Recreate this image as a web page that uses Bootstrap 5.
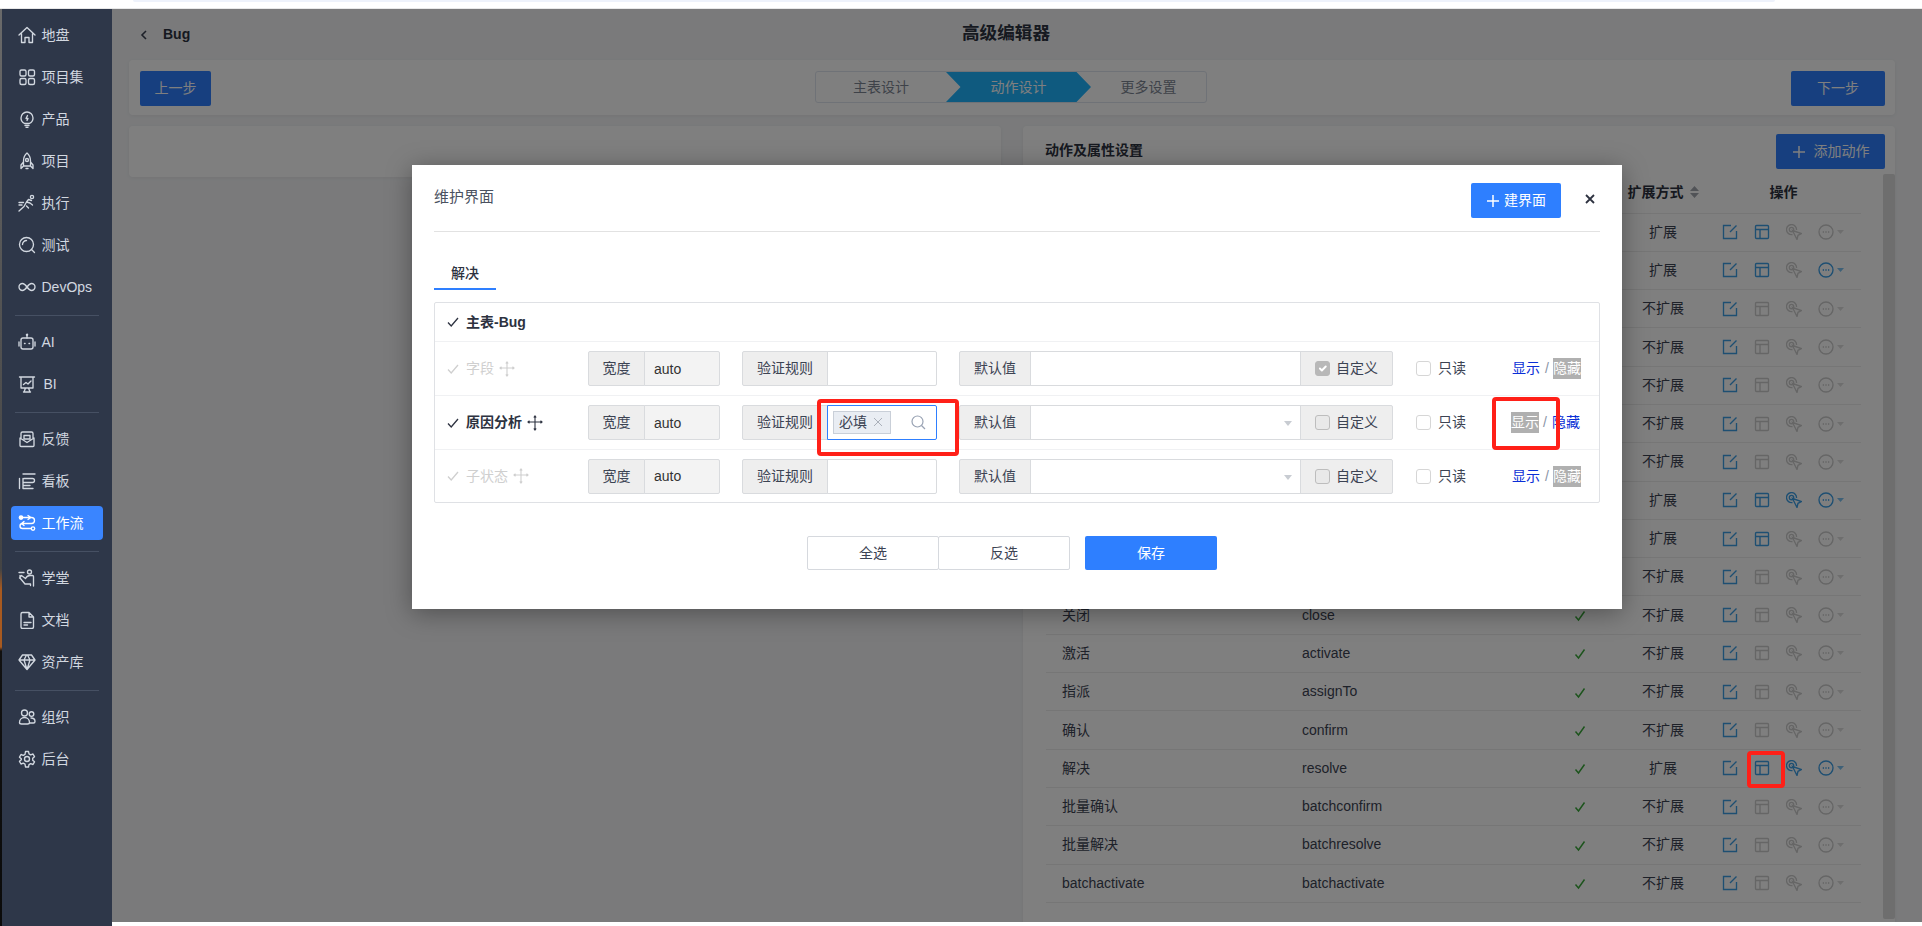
<!DOCTYPE html>
<html lang="zh">
<head>
<meta charset="utf-8">
<title>高级编辑器</title>
<link href="https://cdn.jsdelivr.net/npm/bootstrap@5.3.0/dist/css/bootstrap.min.css" rel="stylesheet">
<style>
html,body{height:926px;overflow:hidden}
body{font-family:"Liberation Sans","Noto Sans CJK SC",sans-serif;font-size:14px;color:#3c4353;background:#fff}
.shell{position:relative;width:1922px;height:926px;overflow:hidden}
.topstrip{height:9px;background:#fff;border-bottom:1px solid #e8e8e8}
.topstrip-bar{margin-left:133px;width:1642px;height:2px;background:#eef2fb;border-radius:0 0 6px 6px}
.frame{height:917px}
.edgeline{width:2px;background:linear-gradient(#6a6a6a 0,#555 260px,#444 560px,#a85a20 580px,#a85a20 638px,#111 642px,#0b0b0b 100%)}
.sidenav{width:110px;background:#2e3749;padding:9px 9px 0;color:#cdd3dc}
.sideitem{height:34px;margin-bottom:8px;padding:0 7px;gap:5.5px;border-radius:4px;color:#d2d8e0;line-height:1}
.sideitem svg{width:18px;height:18px;fill:none;stroke:currentColor;stroke-width:1.35;stroke-linecap:round;stroke-linejoin:round;flex:none}
.sideitem.is-on{background:#3a85ff;color:#fff}
.sidesep{height:1px;background:#465063;margin:11px 4px 9px}
.nudge{margin-left:2px}
.maincol{width:1810px}
.mainarea{position:relative;height:913px;background:#f4f5f7;overflow:hidden;padding:0 27px 0 17px}
.foot{height:4px;background:#fff}
.pagehead{height:51px;position:relative}
.backcaret{width:8px;height:12px;margin-left:11px;margin-right:15px;stroke:#3c4353;fill:none;stroke-width:1.6}
.pagebug{font-weight:700;font-size:14px;color:#2d3240}
.pagetitle{position:absolute;left:0;right:0;text-align:center;font-weight:700;font-size:17.6px;color:#2d3240;top:12px;line-height:24px;padding-right:12px}
.sheet{background:#fff;border-radius:4px;box-shadow:0 1px 4px rgba(0,0,0,.06)}
.toolbar{height:55px;padding:11px 10px 0 11px;margin-bottom:11px}
.btn-brand{background:#2e7fff;border:0;border-radius:2px;color:#fff;font-size:14px;height:35px;display:inline-flex;align-items:center;justify-content:center;padding:0}
.w-prev{width:71px}.w-next{width:94px}
.stepper{width:392px;height:32px;border:1px solid #dfe5ee;border-radius:3px;margin-left:20px;color:#7d8593}
.stepitem{line-height:30px;text-align:center}
.step-a{width:130px}
.step-b{width:145px;background:#1eb4ff;color:#fff;clip-path:polygon(0 0,90% 0,100% 50%,90% 100%,0 100%,10% 50%)}
.step-c{width:115px}
.colsrow{gap:22px}
.leftsheet{width:872px;height:51px}
.rightsheet{width:872px;height:810px;position:relative;padding:8px 10px 0 22px}
.sheethead{height:39px}
.sheettitle{font-weight:700;color:#2d3240;padding-top:6px}
.btn-add{width:109px;gap:8px}
.btn-add svg{width:14px;height:14px;stroke:#fff;stroke-width:1.5;fill:none}
.actable{table-layout:fixed;width:815px;margin:0 0 0 1px;--bs-table-bg:transparent;--bs-table-color:#3c4353;color:#3c4353;border-color:#ececec}
.actable th,.actable td{padding:0 16px;vertical-align:middle;border-bottom:1px solid #ececec;white-space:nowrap}
.actable thead th{height:40px;color:#2d3240}
.actable tbody td{height:38.3px}
.c-name{width:240px}.c-code{width:254px}.c-flag{width:80px;text-align:center}.c-ext{width:86px;text-align:center;padding:0!important}.c-act{width:155px}
.sortmark{width:9px;height:14px;fill:#a3a7ae;margin-left:6px;vertical-align:-2px}
.okmark{width:12px;height:12px;fill:none;stroke:#3aa83a;stroke-width:1.5}
.iconset{gap:16px}
.acticon{width:16px;height:16px;fill:none;stroke:#ccc;stroke-width:1.35;flex:none}
.acticon.on{stroke:#3c9ee5}
.dropmark{width:7px;height:4px;fill:#ddd;margin-left:-13px}
.dropmark.on{fill:#7cc0ef}
.scrollthumb{position:absolute;right:0;top:48px;width:12px;height:745px;background:#dcdcdc;border-radius:2px}
.veil{position:absolute;inset:0;background:rgba(0,0,0,.5);display:flex;justify-content:center;padding-top:156px}
.dialogbox{width:1210px;height:444px;background:#fff;padding:18px 22px 0 22px;box-shadow:0 4px 24px rgba(0,0,0,.35);color:#3c4353}
.dialoghead{height:49px;border-bottom:1px solid #e2e2e2;align-items:flex-start}
.dialogtitle{font-size:15px;color:#4a5160;line-height:28px}
.btn-new{width:90px;gap:4px}
.btn-new svg{width:14px;height:14px;stroke:#fff;stroke-width:1.5;fill:none}
.closemark{width:10px;height:10px;stroke:#2d3240;stroke-width:1.8;margin:11px 5px 0 0;fill:none}
.tabbar{margin-top:21px;height:37px}
.tabone{width:62px;height:37px;line-height:40px;text-align:center;border-bottom:2px solid #2e7fff;color:#2d3240;font-weight:500}
.formbox{margin-top:12px;width:1166px;border:1px solid #dfe1e5;border-radius:2px}
.formhead{height:38px;padding-left:12px;font-weight:700;color:#2d3240;gap:7px}
.formrow{height:54px;border-top:1px solid #f0f1f3;padding-left:12px}
.formrow.last{height:53px}
.tickmark{width:12px;height:12px;fill:none;stroke:#2d3240;stroke-width:1.3;flex:none}
.fieldname{width:141px;gap:7px;color:#2d3240;font-weight:700}
.fieldname.off{color:#cfcfcf;font-weight:400}
.off .tickmark{stroke:#cfcfcf}
.movemark{width:16px;height:16px;stroke:#2d3240;stroke-width:1.1;fill:none;flex:none;margin-left:-2px}
.off .movemark{stroke:#cfcfcf}
.fg{height:35px;flex-wrap:nowrap}
.fg .input-group-text{background:#eee;border:1px solid #d9dbde;border-radius:2px;font-size:14px;color:#3c4353;padding:0;justify-content:center}
.fg .form-control{height:35px;min-height:35px;font-size:14px;border:1px solid #d9dbde;border-radius:2px;padding:0 9px;box-shadow:none;color:#333;background-color:#fff}
.fg-w{width:132px;margin-right:22px}.fg-r{width:195px;margin-right:22px}.fg-d{width:434px;margin-right:23px}
.lab-w{width:57px}.lab-r{width:86px}.lab-d{width:72px}.lab-c{width:93px;gap:6px}
.fg .form-control.ro{background:#f3f3f3}
.fg .selbox{position:relative;flex:1;border:1px solid #d9dbde;background:#fff;margin-left:-1px;border-radius:2px}
.selcaret{position:absolute;right:8px;top:15px;width:8px;height:5px;fill:#c8ccd2}
.rulebox{position:relative;flex:1;margin-left:-1px;border:1px solid #2e7fff;border-radius:2px;background:#fff}
.ruletag{position:absolute;left:5px;top:5px;width:58px;height:23px;background:#e9edf3;border:1px solid #c9cfd8;font-size:14px;line-height:21px;padding-left:5px;color:#3c4353}
.ruletag svg{width:10px;height:10px;stroke:#aab0ba;fill:none;stroke-width:1;margin-left:6px;vertical-align:0}
.rulesearch{position:absolute;right:10px;top:9px;width:15px;height:15px;stroke:#98a2b3;fill:none;stroke-width:1.2}
.fg .form-check-input{width:15px;height:15px;margin:0;border-color:#bdbdbd;border-radius:3px;background-color:#e9e9e9;opacity:1;flex:none}
.fg .form-check-input:checked{background-color:#b8b8b8;border-color:#b8b8b8}
.readbox{width:96px;gap:7px}
.readbox .form-check-input{width:15px;height:15px;margin:0;border-color:#d6d6d6;border-radius:3px;flex:none}
.linkset{gap:5px;white-space:nowrap}
.linkset a{color:#0a2fd6;text-decoration:none}
.linkset .sl{color:#8a94a6}
.linkset .picked{background:#b0b0b0;color:#fff;margin:0 -1px}
.dialogfoot{margin-top:33px;padding-left:373px}
.btn-plain{width:132px;height:34px;background:#fff;border:1px solid #d6d9de;border-radius:2px;color:#3c4353;font-size:14px;padding:0}
.btn-plain+.btn-plain{margin-left:-1px}
.btn-save{width:132px;height:34px;margin-left:15px}
.markbox{position:absolute;border:4px solid #ff2018;border-radius:4px;pointer-events:none}
.mb-1{left:817px;top:399px;width:142px;height:57px}
.mb-2{left:1492px;top:397px;width:68px;height:53px}
.mb-3{left:1747px;top:751px;width:38px;height:37px}
</style>
</head>
<body>
<svg width="0" height="0" class="position-absolute">
<defs>
<symbol id="a-edit" viewBox="0 0 16 16"><path d="M9 1.500H1.500v13h13V7M14.500 1.500 8 8"/></symbol>
<symbol id="a-lay" viewBox="0 0 16 16"><rect x="1.500" y="1.500" width="13" height="13" rx="1"/><path d="M1.500 5.500h13M6 5.500v9"/></symbol>
<symbol id="a-tag" viewBox="0 0 16 16"><path d="M6.500 10.500A5 5 0 1 1 10.500 6"/><circle cx="5.500" cy="5.500" r="2.200"/><path d="M6.500 6.500l9 3-3.500 1.800-1 4.200z"/></symbol>
<symbol id="a-more" viewBox="0 0 16 16"><circle cx="8" cy="8" r="7"/><path d="M4.800 8h1M7.500 8h1M10.200 8h1" stroke-width="1.800"/></symbol>
<symbol id="a-ok" viewBox="0 0 12 12"><path d="M1.500 6.500 4.500 10 10.500 1.500"/></symbol>
<symbol id="a-move" viewBox="0 0 16 16"><path d="M8 1v14M1 7h14M6.800 2.500 8 1l1.200 1.500M6.800 13.500 8 15l1.200-1.500M2.500 5.800 1 7l1.500 1.200M13.500 5.800 15 7l-1.500 1.200"/></symbol>
<symbol id="a-tick" viewBox="0 0 12 12"><path d="M1 6.500 4.200 10 11 2"/></symbol>
</defs>
</svg>
<div class="shell">
  <div class="topstrip"><div class="topstrip-bar"></div></div>
  <div class="frame d-flex">
    <div class="edgeline"></div>
    <nav class="sidenav">
      <div class="sideitem d-flex align-items-center"><svg viewBox="0 0 18 18"><path d="M1 9 9 1.500 17 9M3.500 7.500V16.500H7V11.500h4v5h3.500V7.500"/></svg><span>地盘</span></div>
      <div class="sideitem d-flex align-items-center"><svg viewBox="0 0 18 18"><rect x="2" y="2" width="6" height="6" rx="1.500"/><rect x="10.500" y="2" width="6" height="6" rx="1.500"/><rect x="2" y="10.500" width="6" height="6" rx="1.500"/><rect x="10.500" y="10.500" width="6" height="6" rx="1.500"/></svg><span>项目集</span></div>
      <div class="sideitem d-flex align-items-center"><svg viewBox="0 0 18 18"><path d="M6.500 13.500C4.500 12.500 3 10.500 3 8a6 6 0 0 1 12 0c0 2.500-1.500 4.500-3.500 5.500zM7 15.500h4M8 17.300h2M9.500 5.500 8 8.500h2l-1 2"/></svg><span>产品</span></div>
      <div class="sideitem d-flex align-items-center"><svg viewBox="0 0 18 18"><path d="M9 1c-2.500 2-3.500 5-3.500 8v5h7V9c0-3-1-6-3.500-8zM5.500 10 3 13v3.500l2.500-2.500M12.500 10l2.500 3v3.500L12.500 14M8 16.500h2"/><circle cx="9" cy="8" r="1.500"/></svg><span>项目</span></div>
      <div class="sideitem d-flex align-items-center"><svg viewBox="0 0 18 18"><circle cx="14" cy="3" r="1.600"/><path d="M1 17 6 12.500l2.500-4.500 3.500 1 2.500 2M8.500 8l2-2.500 3 1M8.500 12l2 2M1 8.500h4.500M1 11h3"/></svg><span>执行</span></div>
      <div class="sideitem d-flex align-items-center"><svg viewBox="0 0 18 18"><circle cx="8.500" cy="8.500" r="7"/><path d="M13.500 13.500 16.500 16.500M4.500 8.500a4 4 0 0 1 4-4"/></svg><span>测试</span></div>
      <div class="sideitem d-flex align-items-center"><svg viewBox="0 0 18 18"><path d="M9 9C7.500 7 6 5.500 4.500 5.500a3.500 3.500 0 0 0 0 7C6 12.500 7.500 11 9 9zm0 0c1.500-2 3-3.500 4.500-3.500a3.500 3.500 0 0 1 0 7C12 12.500 10.500 11 9 9z"/></svg><span>DevOps</span></div>
      <div class="sidesep"></div>
      <div class="sideitem d-flex align-items-center"><svg viewBox="0 0 18 18"><rect x="3" y="5" width="12" height="11" rx="2"/><path d="M9 5V2M1 9v4M17 9v4M6.500 10.500h.6M11 10.500h.6"/><circle cx="9" cy="1.800" r=".6"/></svg><span>AI</span></div>
      <div class="sideitem d-flex align-items-center"><svg viewBox="0 0 18 18"><path d="M1.500 2h15M3 2v11h12V2M6 17l1.500-4M12 17l-1.500-4M5.500 17h7M5.500 9.500l2.500-2 2 1.500 3-3"/></svg><span class="nudge">BI</span></div>
      <div class="sidesep"></div>
      <div class="sideitem d-flex align-items-center"><svg viewBox="0 0 18 18"><path d="M3 8V3.500C3 2.500 3.800 2 4.500 2h9c.7 0 1.500.5 1.500 1.500V8M2 8v7.500c0 .5.500 1 1 1h12c.5 0 1-.5 1-1V8L9 12.500zM6 5.500h6V9H6z"/></svg><span>反馈</span></div>
      <div class="sideitem d-flex align-items-center"><svg viewBox="0 0 18 18"><path d="M5 2h12M1.500 6.500v10M6 6.500h8.500a1.500 1.500 0 0 1 0 4H5M5 6.500v4M5 10.500v6h10M5 13.500h7"/></svg><span>看板</span></div>
      <div class="sideitem is-on d-flex align-items-center"><svg viewBox="0 0 18 18"><circle cx="3" cy="3.500" r="1.700" fill="currentColor"/><circle cx="15" cy="14.500" r="1.700"/><path d="M5 3.500h8.500a3 3 0 0 1 0 6h-9a2.500 2.500 0 0 0 0 5H13M10 1.500l3 2-3 2M6 7.500l-2.500 2 2.500 2"/></svg><span>工作流</span></div>
      <div class="sidesep"></div>
      <div class="sideitem d-flex align-items-center"><svg viewBox="0 0 18 18"><circle cx="11.500" cy="3" r="2"/><path d="M1 3.500h5M2 6.500v2.500l5 6h5.500v1.500M1.500 9l2-2.500 4 3M7.500 9.500c1-2 2.500-3 4.500-3h2.500c.7 0 1 .5 1 1V17"/></svg><span>学堂</span></div>
      <div class="sideitem d-flex align-items-center"><svg viewBox="0 0 18 18"><path d="M3 3c0-1 .5-1.500 1.500-1.500H11L15.500 6v10c0 1-.5 1.500-1.500 1.500H4.500C3.500 17.500 3 17 3 16zM11 1.500V6h4.500M6 11.500h7M6 14h3.500"/></svg><span>文档</span></div>
      <div class="sideitem d-flex align-items-center"><svg viewBox="0 0 18 18"><path d="M4.500 2h9L17 7 9 16.500 1 7zM1 7h16M6 7l3 9.500L12 7 9.500 2M6 7l2.500-5"/></svg><span>资产库</span></div>
      <div class="sidesep"></div>
      <div class="sideitem d-flex align-items-center"><svg viewBox="0 0 18 18"><circle cx="6.500" cy="5" r="3"/><circle cx="13.500" cy="6" r="2.300"/><path d="M1.500 14.500c0-3 2.200-5 5-5s5 2 5 5c0 1-1 1.500-2 1.500H3.500c-1 0-2-.5-2-1.500zM13 10c2.300 0 4 1.500 4 3.500 0 .8-.7 1.500-1.500 1.500H12"/></svg><span>组织</span></div>
      <div class="sideitem d-flex align-items-center"><svg viewBox="0 0 18 18"><circle cx="9" cy="9" r="2.500"/><path d="M7.500 1.500h3l.5 2.300 1.700 1 2.300-.8 1.500 2.700-1.800 1.600v1.900l1.800 1.600-1.500 2.700-2.300-.8-1.700 1-.5 2.300h-3L7 14.200l-1.700-1-2.300.8-1.500-2.700 1.800-1.600V8.800L1.500 7.200 3 4.500l2.300.8 1.700-1z"/></svg><span>后台</span></div>
    </nav>
    <div class="maincol">
      <main class="mainarea">
        <div class="pagehead d-flex align-items-center">
          <svg class="backcaret" viewBox="0 0 8 12"><path d="M6 2 2 6l4 4"/></svg>
          <span class="pagebug">Bug</span>
          <div class="pagetitle">高级编辑器</div>
        </div>
        <div class="sheet toolbar d-flex justify-content-between align-items-start">
          <button class="btn-brand w-prev" type="button">上一步</button>
          <div class="stepper d-flex">
            <div class="stepitem step-a">主表设计</div>
            <div class="stepitem step-b">动作设计</div>
            <div class="stepitem step-c">更多设置</div>
          </div>
          <button class="btn-brand w-next" type="button">下一步</button>
        </div>
        <div class="colsrow d-flex">
          <div class="sheet leftsheet"></div>
          <div class="sheet rightsheet">
            <div class="sheethead d-flex justify-content-between align-items-start">
              <div class="sheettitle">动作及属性设置</div>
              <button class="btn-brand btn-add" type="button"><svg viewBox="0 0 14 14"><path d="M7 1v12M1 7h12"/></svg>添加动作</button>
            </div>
            <table class="table actable mb-0">
              <thead><tr><th class="c-name"></th><th class="c-code"></th><th class="c-flag"></th><th class="c-ext">扩展方式<svg class="sortmark" viewBox="0 0 9 14"><path d="M4.500 1 9 6H0zM0 8h9l-4.500 5z"/></svg></th><th class="c-act text-center">操作</th></tr></thead>
              <tbody>
<tr><td></td><td></td><td class="c-flag"></td><td class="c-ext">扩展</td><td><div class="iconset d-flex align-items-center"><svg class="acticon on"><use href="#a-edit"/></svg><svg class="acticon on"><use href="#a-lay"/></svg><svg class="acticon"><use href="#a-tag"/></svg><svg class="acticon"><use href="#a-more"/></svg><svg class="dropmark" viewBox="0 0 7 4"><path d="M0 0h7L3.500 4z"/></svg></div></td></tr>
<tr><td></td><td></td><td class="c-flag"></td><td class="c-ext">扩展</td><td><div class="iconset d-flex align-items-center"><svg class="acticon on"><use href="#a-edit"/></svg><svg class="acticon on"><use href="#a-lay"/></svg><svg class="acticon"><use href="#a-tag"/></svg><svg class="acticon on"><use href="#a-more"/></svg><svg class="dropmark on" viewBox="0 0 7 4"><path d="M0 0h7L3.500 4z"/></svg></div></td></tr>
<tr><td></td><td></td><td class="c-flag"></td><td class="c-ext">不扩展</td><td><div class="iconset d-flex align-items-center"><svg class="acticon on"><use href="#a-edit"/></svg><svg class="acticon"><use href="#a-lay"/></svg><svg class="acticon"><use href="#a-tag"/></svg><svg class="acticon"><use href="#a-more"/></svg><svg class="dropmark" viewBox="0 0 7 4"><path d="M0 0h7L3.500 4z"/></svg></div></td></tr>
<tr><td></td><td></td><td class="c-flag"></td><td class="c-ext">不扩展</td><td><div class="iconset d-flex align-items-center"><svg class="acticon on"><use href="#a-edit"/></svg><svg class="acticon"><use href="#a-lay"/></svg><svg class="acticon"><use href="#a-tag"/></svg><svg class="acticon"><use href="#a-more"/></svg><svg class="dropmark" viewBox="0 0 7 4"><path d="M0 0h7L3.500 4z"/></svg></div></td></tr>
<tr><td></td><td></td><td class="c-flag"></td><td class="c-ext">不扩展</td><td><div class="iconset d-flex align-items-center"><svg class="acticon on"><use href="#a-edit"/></svg><svg class="acticon"><use href="#a-lay"/></svg><svg class="acticon"><use href="#a-tag"/></svg><svg class="acticon"><use href="#a-more"/></svg><svg class="dropmark" viewBox="0 0 7 4"><path d="M0 0h7L3.500 4z"/></svg></div></td></tr>
<tr><td></td><td></td><td class="c-flag"></td><td class="c-ext">不扩展</td><td><div class="iconset d-flex align-items-center"><svg class="acticon on"><use href="#a-edit"/></svg><svg class="acticon"><use href="#a-lay"/></svg><svg class="acticon"><use href="#a-tag"/></svg><svg class="acticon"><use href="#a-more"/></svg><svg class="dropmark" viewBox="0 0 7 4"><path d="M0 0h7L3.500 4z"/></svg></div></td></tr>
<tr><td></td><td></td><td class="c-flag"></td><td class="c-ext">不扩展</td><td><div class="iconset d-flex align-items-center"><svg class="acticon on"><use href="#a-edit"/></svg><svg class="acticon"><use href="#a-lay"/></svg><svg class="acticon"><use href="#a-tag"/></svg><svg class="acticon"><use href="#a-more"/></svg><svg class="dropmark" viewBox="0 0 7 4"><path d="M0 0h7L3.500 4z"/></svg></div></td></tr>
<tr><td></td><td></td><td class="c-flag"></td><td class="c-ext">扩展</td><td><div class="iconset d-flex align-items-center"><svg class="acticon on"><use href="#a-edit"/></svg><svg class="acticon on"><use href="#a-lay"/></svg><svg class="acticon on"><use href="#a-tag"/></svg><svg class="acticon on"><use href="#a-more"/></svg><svg class="dropmark on" viewBox="0 0 7 4"><path d="M0 0h7L3.500 4z"/></svg></div></td></tr>
<tr><td></td><td></td><td class="c-flag"></td><td class="c-ext">扩展</td><td><div class="iconset d-flex align-items-center"><svg class="acticon on"><use href="#a-edit"/></svg><svg class="acticon on"><use href="#a-lay"/></svg><svg class="acticon"><use href="#a-tag"/></svg><svg class="acticon"><use href="#a-more"/></svg><svg class="dropmark" viewBox="0 0 7 4"><path d="M0 0h7L3.500 4z"/></svg></div></td></tr>
<tr><td></td><td></td><td class="c-flag"></td><td class="c-ext">不扩展</td><td><div class="iconset d-flex align-items-center"><svg class="acticon on"><use href="#a-edit"/></svg><svg class="acticon"><use href="#a-lay"/></svg><svg class="acticon"><use href="#a-tag"/></svg><svg class="acticon"><use href="#a-more"/></svg><svg class="dropmark" viewBox="0 0 7 4"><path d="M0 0h7L3.500 4z"/></svg></div></td></tr>
<tr><td>关闭</td><td>close</td><td class="c-flag"><svg class="okmark"><use href="#a-ok"/></svg></td><td class="c-ext">不扩展</td><td><div class="iconset d-flex align-items-center"><svg class="acticon on"><use href="#a-edit"/></svg><svg class="acticon"><use href="#a-lay"/></svg><svg class="acticon"><use href="#a-tag"/></svg><svg class="acticon"><use href="#a-more"/></svg><svg class="dropmark" viewBox="0 0 7 4"><path d="M0 0h7L3.500 4z"/></svg></div></td></tr>
<tr><td>激活</td><td>activate</td><td class="c-flag"><svg class="okmark"><use href="#a-ok"/></svg></td><td class="c-ext">不扩展</td><td><div class="iconset d-flex align-items-center"><svg class="acticon on"><use href="#a-edit"/></svg><svg class="acticon"><use href="#a-lay"/></svg><svg class="acticon"><use href="#a-tag"/></svg><svg class="acticon"><use href="#a-more"/></svg><svg class="dropmark" viewBox="0 0 7 4"><path d="M0 0h7L3.500 4z"/></svg></div></td></tr>
<tr><td>指派</td><td>assignTo</td><td class="c-flag"><svg class="okmark"><use href="#a-ok"/></svg></td><td class="c-ext">不扩展</td><td><div class="iconset d-flex align-items-center"><svg class="acticon on"><use href="#a-edit"/></svg><svg class="acticon"><use href="#a-lay"/></svg><svg class="acticon"><use href="#a-tag"/></svg><svg class="acticon"><use href="#a-more"/></svg><svg class="dropmark" viewBox="0 0 7 4"><path d="M0 0h7L3.500 4z"/></svg></div></td></tr>
<tr><td>确认</td><td>confirm</td><td class="c-flag"><svg class="okmark"><use href="#a-ok"/></svg></td><td class="c-ext">不扩展</td><td><div class="iconset d-flex align-items-center"><svg class="acticon on"><use href="#a-edit"/></svg><svg class="acticon"><use href="#a-lay"/></svg><svg class="acticon"><use href="#a-tag"/></svg><svg class="acticon"><use href="#a-more"/></svg><svg class="dropmark" viewBox="0 0 7 4"><path d="M0 0h7L3.500 4z"/></svg></div></td></tr>
<tr><td>解决</td><td>resolve</td><td class="c-flag"><svg class="okmark"><use href="#a-ok"/></svg></td><td class="c-ext">扩展</td><td><div class="iconset d-flex align-items-center"><svg class="acticon on"><use href="#a-edit"/></svg><svg class="acticon on"><use href="#a-lay"/></svg><svg class="acticon on"><use href="#a-tag"/></svg><svg class="acticon on"><use href="#a-more"/></svg><svg class="dropmark on" viewBox="0 0 7 4"><path d="M0 0h7L3.500 4z"/></svg></div></td></tr>
<tr><td>批量确认</td><td>batchconfirm</td><td class="c-flag"><svg class="okmark"><use href="#a-ok"/></svg></td><td class="c-ext">不扩展</td><td><div class="iconset d-flex align-items-center"><svg class="acticon on"><use href="#a-edit"/></svg><svg class="acticon"><use href="#a-lay"/></svg><svg class="acticon"><use href="#a-tag"/></svg><svg class="acticon"><use href="#a-more"/></svg><svg class="dropmark" viewBox="0 0 7 4"><path d="M0 0h7L3.500 4z"/></svg></div></td></tr>
<tr><td>批量解决</td><td>batchresolve</td><td class="c-flag"><svg class="okmark"><use href="#a-ok"/></svg></td><td class="c-ext">不扩展</td><td><div class="iconset d-flex align-items-center"><svg class="acticon on"><use href="#a-edit"/></svg><svg class="acticon"><use href="#a-lay"/></svg><svg class="acticon"><use href="#a-tag"/></svg><svg class="acticon"><use href="#a-more"/></svg><svg class="dropmark" viewBox="0 0 7 4"><path d="M0 0h7L3.500 4z"/></svg></div></td></tr>
<tr><td>batchactivate</td><td>batchactivate</td><td class="c-flag"><svg class="okmark"><use href="#a-ok"/></svg></td><td class="c-ext">不扩展</td><td><div class="iconset d-flex align-items-center"><svg class="acticon on"><use href="#a-edit"/></svg><svg class="acticon"><use href="#a-lay"/></svg><svg class="acticon"><use href="#a-tag"/></svg><svg class="acticon"><use href="#a-more"/></svg><svg class="dropmark" viewBox="0 0 7 4"><path d="M0 0h7L3.500 4z"/></svg></div></td></tr>
              </tbody>
            </table>
            <div class="scrollthumb"></div>
          </div>
        </div>
        <div class="veil">
          <div class="dialogbox">
            <div class="dialoghead d-flex justify-content-between">
              <div class="dialogtitle">维护界面</div>
              <div class="d-flex">
                <button class="btn-brand btn-new" type="button"><svg viewBox="0 0 14 14"><path d="M7 1v12M1 7h12"/></svg>建界面</button>
                <svg class="closemark ms-4" viewBox="0 0 10 10"><path d="M1 1l8 8M9 1l-8 8"/></svg>
              </div>
            </div>
            <div class="tabbar"><div class="tabone">解决</div></div>
            <div class="formbox">
              <div class="formhead d-flex align-items-center"><svg class="tickmark"><use href="#a-tick"/></svg>主表-Bug</div>
              <div class="formrow d-flex align-items-center">
                <div class="fieldname off d-flex align-items-center"><svg class="tickmark"><use href="#a-tick"/></svg>字段<svg class="movemark"><use href="#a-move"/></svg></div>
                <div class="input-group fg fg-w"><span class="input-group-text lab-w">宽度</span><input class="form-control ro" value="auto" readonly></div>
                <div class="input-group fg fg-r"><span class="input-group-text lab-r">验证规则</span><input class="form-control"></div>
                <div class="input-group fg fg-d"><span class="input-group-text lab-d">默认值</span><input class="form-control"><span class="input-group-text lab-c"><input class="form-check-input" type="checkbox" checked disabled>自定义</span></div>
                <div class="readbox d-flex align-items-center"><input class="form-check-input" type="checkbox">只读</div>
                <div class="linkset d-flex"><a href="#">显示</a><span class="sl">/</span><a href="#" class="picked">隐藏</a></div>
              </div>
              <div class="formrow d-flex align-items-center">
                <div class="fieldname d-flex align-items-center"><svg class="tickmark"><use href="#a-tick"/></svg>原因分析<svg class="movemark"><use href="#a-move"/></svg></div>
                <div class="input-group fg fg-w"><span class="input-group-text lab-w">宽度</span><input class="form-control ro" value="auto" readonly></div>
                <div class="input-group fg fg-r"><span class="input-group-text lab-r">验证规则</span><div class="rulebox"><span class="ruletag">必填<svg viewBox="0 0 10 10"><path d="M1 1l8 8M9 1l-8 8"/></svg></span><svg class="rulesearch" viewBox="0 0 15 15"><circle cx="6.500" cy="6.500" r="5.500"/><path d="M10.500 10.500 14 14"/></svg></div></div>
                <div class="input-group fg fg-d"><span class="input-group-text lab-d">默认值</span><div class="selbox"><svg class="selcaret" viewBox="0 0 8 5"><path d="M0 0h8L4 5z"/></svg></div><span class="input-group-text lab-c"><input class="form-check-input" type="checkbox" disabled>自定义</span></div>
                <div class="readbox d-flex align-items-center"><input class="form-check-input" type="checkbox">只读</div>
                <div class="linkset d-flex"><a href="#" class="picked">显示</a><span class="sl">/</span><a href="#">隐藏</a></div>
              </div>
              <div class="formrow last d-flex align-items-center">
                <div class="fieldname off d-flex align-items-center"><svg class="tickmark"><use href="#a-tick"/></svg>子状态<svg class="movemark"><use href="#a-move"/></svg></div>
                <div class="input-group fg fg-w"><span class="input-group-text lab-w">宽度</span><input class="form-control ro" value="auto" readonly></div>
                <div class="input-group fg fg-r"><span class="input-group-text lab-r">验证规则</span><input class="form-control"></div>
                <div class="input-group fg fg-d"><span class="input-group-text lab-d">默认值</span><div class="selbox"><svg class="selcaret" viewBox="0 0 8 5"><path d="M0 0h8L4 5z"/></svg></div><span class="input-group-text lab-c"><input class="form-check-input" type="checkbox" disabled>自定义</span></div>
                <div class="readbox d-flex align-items-center"><input class="form-check-input" type="checkbox">只读</div>
                <div class="linkset d-flex"><a href="#">显示</a><span class="sl">/</span><a href="#" class="picked">隐藏</a></div>
              </div>
            </div>
            <div class="dialogfoot d-flex">
              <button class="btn-plain" type="button">全选</button>
              <button class="btn-plain" type="button">反选</button>
              <button class="btn-brand btn-save" type="button">保存</button>
            </div>
          </div>
        </div>
      </main>
      <div class="foot"></div>
    </div>
  </div>
  <div class="markbox mb-1"></div>
  <div class="markbox mb-2"></div>
  <div class="markbox mb-3"></div>
</div>
<script src="https://cdn.jsdelivr.net/npm/bootstrap@5.3.0/dist/js/bootstrap.bundle.min.js"></script>
</body>
</html>
